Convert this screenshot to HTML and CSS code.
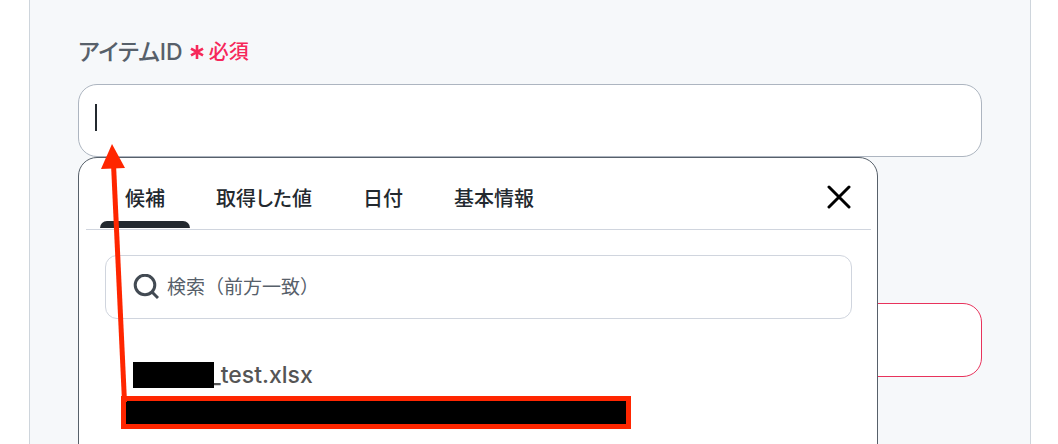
FILE: index.html
```
<!DOCTYPE html>
<html lang="ja">
<head>
    <meta charset="UTF-8">
    <meta name="viewport" content="width=device-width, initial-scale=1.0">
    <title>アイテムID</title>
    <link rel="stylesheet" href="styles.css">
</head>
<body>
    <main class="panel">
        <div class="field">
            <label class="field-label" for="item-id">
                アイテムID
                <span class="required">
                    <svg class="asterisk" viewBox="0 0 14 16" aria-hidden="true">
                        <path d="M7 1v14M1 4.6l12 6.8M13 4.6L1 11.4"/>
                    </svg>
                    必須
                </span>
            </label>
            <div class="input-wrap">
                <input class="text-input" id="item-id" type="text">
                <span class="caret"></span>

                <!-- Suggestion popup -->
                <div class="popup">
                    <div class="popup-header">
                        <div class="tabs">
                            <button class="tab active" type="button">候補</button>
                            <button class="tab" type="button">取得した値</button>
                            <button class="tab" type="button">日付</button>
                            <button class="tab" type="button">基本情報</button>
                        </div>
                        <button class="close-btn" type="button" aria-label="閉じる">
                            <svg viewBox="0 0 24 24" aria-hidden="true">
                                <path d="M2 2l20 20M22 2L2 22"/>
                            </svg>
                        </button>
                    </div>
                    <div class="search">
                        <svg class="search-icon" viewBox="0 0 26 26" aria-hidden="true">
                            <circle cx="12" cy="11" r="9.8"/>
                            <path d="M19 18l6 6"/>
                        </svg>
                        <input class="search-input" type="search" placeholder="検索（前方一致）" aria-label="検索（前方一致）">
                    </div>
                    <div class="results">
                        <a class="result" href="#"><span class="mask"></span>_test.xlsx</a>
                        <a class="result-marked" href="#" aria-label="候補の値"></a>
                    </div>
                </div>
            </div>
        </div>

        <div class="field">
            <input class="text-input error" type="text" aria-label="値">
        </div>

        <!-- Arrow from the marked value to the input -->
        <svg class="arrow" viewBox="0 0 30 260" aria-hidden="true">
            <path class="arrow-line" d="M13.5 20L24.5 258"/>
            <path class="arrow-head" d="M12 0L1 25l24-1z"/>
        </svg>
    </main>
</body>
</html>
```
FILE: styles.css
```
* {
    box-sizing: border-box;
}
body {
    margin: 0;
    font-family: Inter, "Noto Sans CJK JP", sans-serif;
    background-color: #fff;
    color: #23292f;
}
.panel {
    position: relative;
    min-height: 100vh;
    margin: 0 27px 0 29px;
    padding: 32px 48px 60px;
    background-color: #f6f8fa;
    border: 1px solid #ced5dc;
    border-width: 0 1px;
    overflow: hidden;
}
.field {
    margin-bottom: 146px;
}
.field:last-of-type {
    margin-bottom: 0;
}
.field-label {
    display: flex;
    align-items: center;
    gap: 7px;
    height: 36px;
    margin-bottom: 16px;
    font-size: 23px;
    font-weight: 500;
    font-feature-settings: "palt";
    color: #57606a;
}
.required {
    display: flex;
    align-items: center;
    gap: 5px;
    font-size: 20px;
    color: #f6285a;
}
.asterisk {
    width: 14px;
    height: 16px;
    margin-top: 4px;
    fill: none;
    stroke: currentColor;
    stroke-width: 2.6;
}
.input-wrap {
    position: relative;
}
.text-input {
    display: block;
    width: 100%;
    height: 73px;
    padding: 0 16px;
    font: inherit;
    font-size: 23px;
    background-color: #fff;
    border: 1px solid #adb5c0;
    border-radius: 19px;
    outline: none;
}
.text-input.error {
    height: 74px;
    border-color: #e8335c;
}
.caret {
    position: absolute;
    top: 20px;
    left: 17px;
    width: 2px;
    height: 27px;
    background-color: #23292f;
}
.popup {
    position: absolute;
    top: 100%;
    left: 0;
    right: 104px;
    padding-bottom: 60px;
    background-color: #fff;
    border: 1px solid #57606a;
    border-radius: 19px;
}
.popup-header {
    display: flex;
    justify-content: space-between;
    margin: 0 6px 0 7px;
    padding: 0 14px;
    border-bottom: 1px solid #d0d5de;
}
.tabs {
    display: flex;
    gap: 1px;
}
.tab {
    position: relative;
    height: 71px;
    padding: 8px 25px 0;
    font: inherit;
    font-size: 20px;
    font-weight: 500;
    font-feature-settings: "palt";
    color: #23292f;
    background: none;
    border: none;
    cursor: pointer;
}
.tab.active::after {
    content: "";
    position: absolute;
    left: 0;
    right: 0;
    bottom: 1px;
    height: 7px;
    background-color: #23292f;
    border-radius: 7px 7px 0 0;
}
.close-btn {
    display: flex;
    align-items: center;
    padding: 6px 6px 0;
    background: none;
    border: none;
    cursor: pointer;
}
.close-btn svg {
    width: 24px;
    height: 24px;
    fill: none;
    stroke: #000;
    stroke-width: 3;
    stroke-linecap: round;
}
.search {
    display: flex;
    align-items: center;
    gap: 8px;
    height: 64px;
    margin: 25px 25px 0 26px;
    padding: 0 27px;
    border: 1px solid #d0d5de;
    border-radius: 12px;
}
.search-icon {
    width: 26px;
    height: 26px;
    fill: none;
    stroke: #424a53;
    stroke-width: 3;
}
.search-input {
    flex: 1;
    padding: 0;
    font: inherit;
    font-size: 19px;
    border: none;
    outline: none;
}
.search-input::placeholder {
    color: #57606a;
}
.results {
    display: flex;
    flex-direction: column;
    align-items: flex-start;
    padding: 43px 42px 0;
}
.result {
    display: flex;
    align-items: center;
    height: 26px;
    margin-left: 12px;
    font-size: 23px;
    font-weight: 500;
    color: #555;
    text-decoration: none;
}
.mask {
    position: relative;
    width: 81px;
    height: 26px;
    margin-right: -4px;
    background-color: #000;
}
.result-marked {
    width: 510px;
    max-width: 100%;
    height: 33px;
    margin-top: 8px;
    background-color: #000;
    border: 5px solid #ff2600;
}
.arrow {
    position: absolute;
    top: 144px;
    left: 70px;
    width: 30px;
    height: 260px;
}
.arrow-line {
    fill: none;
    stroke: #ff2600;
    stroke-width: 5;
}
.arrow-head {
    fill: #ff2600;
}
```
